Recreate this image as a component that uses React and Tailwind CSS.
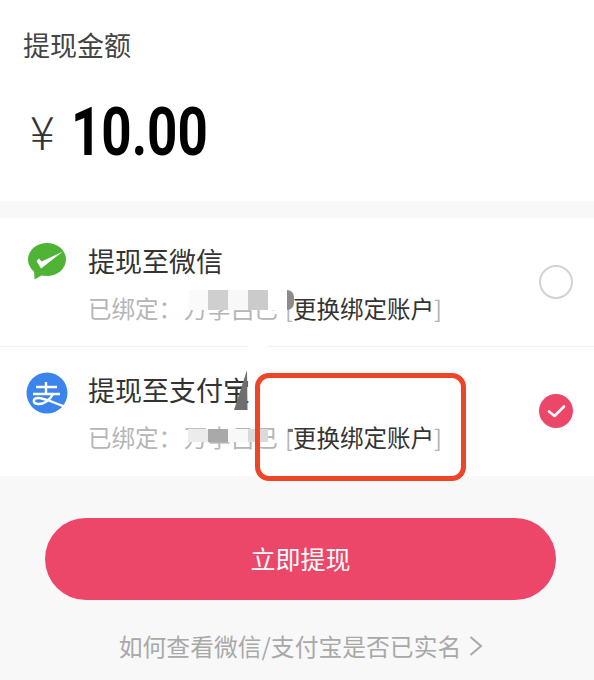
import React from 'react';

const cjk = { fontFamily: '"Noto Sans CJK SC", sans-serif' };

const WechatIcon = () => (
  <svg width="38" height="37" viewBox="0 0 38 37" className="shrink-0 ml-[2px]">
    <ellipse cx="19" cy="16.5" rx="19" ry="16.5" fill="#4fb336" />
    <path d="M6 26 L6.5 36.5 L16 31 Z" fill="#4fb336" />
    <path d="M8.5 18 L13 25.5 L35 8.5 L13.5 18.5 L11 15.5 Z" fill="#fff" />
  </svg>
);

const AlipayIcon = () => (
  <svg width="42" height="42" viewBox="0 0 42 42" className="shrink-0">
    <circle cx="21" cy="21" r="20.5" fill="#3a84ec" />
    <path d="M10 15 H31 M20 10 V22 M7 22 H34" stroke="#fff" strokeWidth="2.4" fill="none" />
    <path d="M27 22 C24 28 18 32.5 11.5 32 C6.5 31.5 6.5 26 12 26 C19 26 28 31 38.5 34.5" stroke="#fff" strokeWidth="2.4" fill="none" />
  </svg>
);

const Radio = ({ checked }) =>
  checked ? (
    <div className="w-[34px] h-[34px] rounded-full bg-[#ec4769] flex items-center justify-center">
      <svg width="21" height="16" viewBox="0 0 21 16">
        <path d="M3 8.5 L8.5 13 L18 3.5" stroke="#fff" strokeWidth="2.6" fill="none" strokeLinecap="round" strokeLinejoin="round" />
      </svg>
    </div>
  ) : (
    <div className="w-[34px] h-[34px] rounded-full border-2 border-[#d2d2d2] bg-white" />
  );

const Row = ({ icon, title, mosaic, sliver, artifact, checked, border }) => (
  <div className={`relative h-[129px] flex items-start pl-[26px] pr-[21px] bg-white ${border ? 'border-b border-[#f1f1f1]' : ''}`}>
    <div className="w-[62px] pt-[25px] flex">{icon}</div>
    <div className="flex-1 pt-[22px]">
      <div className="relative text-[27px] leading-[42px] text-[#333]">
        {title}
        {artifact}
      </div>
      <div className="mt-[9px] flex items-center h-[36px] text-[23.5px] text-[#b5b5b5] whitespace-nowrap">
        <span>已绑定：</span>
        <span className="relative ml-[2px] w-[100px] text-[#b5b5b5]">
          万孛吕巳
          {mosaic}
        </span>
        <span className="ml-[1px] relative">
          [
          {sliver}
        </span>
        <span className="text-[#333]">更换绑定账户</span>
        <span>]</span>
      </div>
    </div>
    <div className="pt-[47px]">
      <Radio checked={checked} />
    </div>
  </div>
);

// mosaic left over the blurred account name
const mosaicTop = (
  <div className="absolute inset-x-0 top-[-2px] h-[21px] bg-white flex items-end pl-[5px]">
    <div className="w-[19px] h-[20px] bg-[#fafafa]" />
    <div className="w-[20px] h-[20px] bg-[#cfcfcf]" />
    <div className="w-[20px] h-[20px] bg-[#f8f8f8]" />
    <div className="w-[20px] h-[20px] bg-[#cbcbcb]" />
  </div>
);

const mosaicBottom = (
  <div className="absolute inset-x-0 top-0 h-[22px] flex items-end pl-[4px]">
    <div className="w-[20px] h-[13px] bg-[#ececec]" />
    <div className="w-[20px] h-[13px] bg-[#a9a9a9]" />
    <div className="w-[20px] h-[13px] bg-[#f8f8f8]" />
    <div className="w-[20px] h-[13px] bg-[#dadada]" />
  </div>
);

export default function App() {
  return (
    <div className="relative w-[594px] h-[680px] overflow-hidden bg-[#f8f8f8]" style={cjk}>
      {/* amount */}
      <div className="h-[201px] bg-white pl-[23px] pt-[24px]">
        <div className="text-[27px] leading-[42px] text-[#444]">提现金额</div>
        <div className="flex items-center mt-[26px] pl-[7px] h-[76px]">
          <span className="w-[41px] text-[46px] text-[#333] leading-none font-light">¥</span>
          <span
            className="text-[67px] leading-none font-bold text-black origin-left scale-x-[0.79] pt-[4px]"
            style={{ fontFamily: 'Roboto, sans-serif' }}
          >
            10.00
          </span>
        </div>
      </div>

      <div className="mt-[17px]">
        <Row
          icon={<WechatIcon />}
          title="提现至微信"
          mosaic={mosaicTop}
          sliver={<span className="absolute left-[2px] top-[-1px] w-[7px] h-[20px] bg-[#8c8c8c] rounded-r-full" />}
          checked={false}
          border
          artifact={null}
        />
        <Row
          icon={<AlipayIcon />}
          title="提现至支付宝"
          mosaic={mosaicBottom}
          sliver={<span className="absolute left-[3px] top-[9px] w-[5px] h-[3px] bg-[#777]" />}
          checked
          artifact={
            <svg width="14" height="40" viewBox="0 0 14 40" className="absolute left-[146px] top-[1px]">
              <path d="M13 0 L13.5 40 L0 40 Z" fill="#6f6f6f" />
            </svg>
          }
        />
      </div>

      {/* gap in the divider */}
      <div className="absolute left-[248px] top-[345px] w-[19px] h-[4px] bg-white" />

      {/* red highlight drawn over the screenshot */}
      <div className="absolute left-[255px] top-[373px] w-[211px] h-[108px] rounded-[14px] border-[5px] border-[#ee4428]" />

      <div className="mt-[42px] ml-[45px] mr-[38px] h-[82px] rounded-full bg-[#ec4769] flex items-center justify-center text-[25px] text-white">
        立即提现
      </div>
      <div className="mt-[26px] flex items-center justify-center pl-[9px] text-[23.8px] leading-[40px] text-[#a8a8a8]">
        如何查看微信/支付宝是否已实名
        <svg width="16" height="22" viewBox="0 0 16 22" className="ml-[7px]">
          <path d="M2.5 2 L13 11 L2.5 20" stroke="#a8a8a8" strokeWidth="2" fill="none" />
        </svg>
      </div>
    </div>
  );
}
